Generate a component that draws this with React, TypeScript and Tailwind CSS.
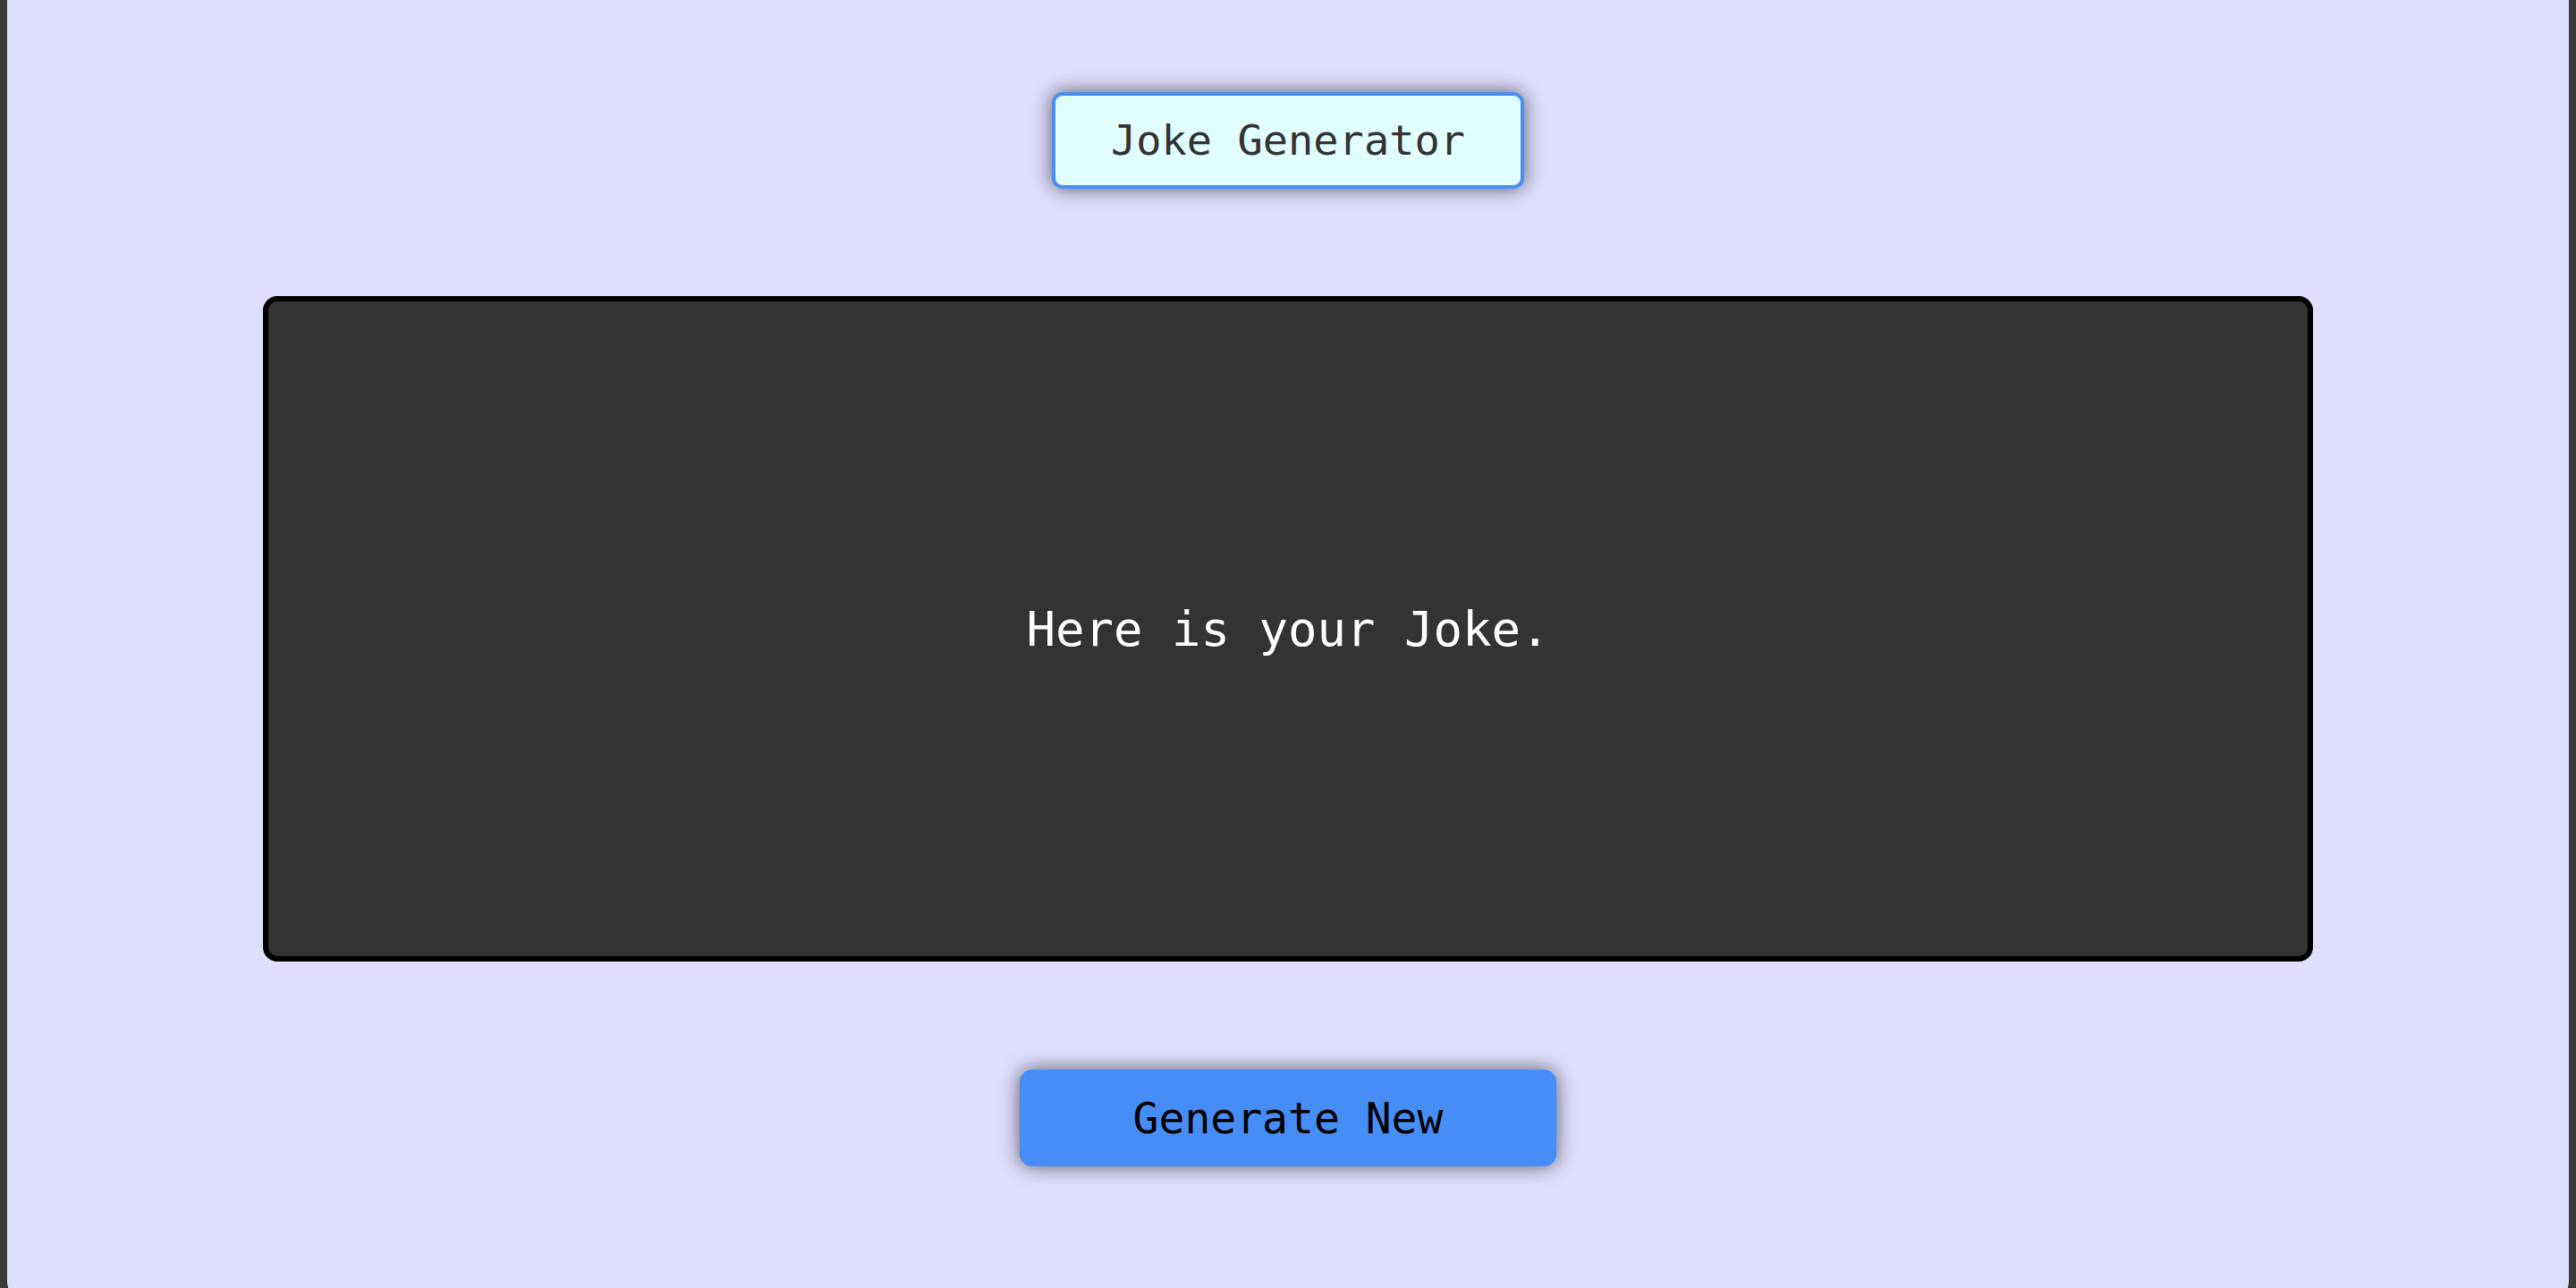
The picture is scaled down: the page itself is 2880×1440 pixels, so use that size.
import React, { useState } from 'react';

const JOKES = [
  'Here is your Joke.',
  'Why do programmers prefer dark mode? Because light attracts bugs.',
  'I told my computer a joke about UDP. It did not get it.',
];

const mono = { fontFamily: '"DejaVu Sans Mono", "Liberation Mono", monospace' };

export default function App() {
  const [idx, setIdx] = useState(0);

  return (
    <div className="h-[1440px] w-full overflow-hidden bg-[#3a3a3a]">
      <div
        className="mx-2 flex h-[1460px] flex-col items-center rounded-b-[28px] bg-[#dfdffd] pt-[103px]"
        style={mono}
      >
        {/* header pill */}
        <div className="flex h-[108px] w-[528px] items-center justify-center rounded-[12px] border-4 border-[#4a8ff5] bg-[#e2ffff] text-[47px] text-[#333333] shadow-[0_0_22px_rgba(0,0,0,0.6)]">
          Joke Generator
        </div>

        {/* joke panel */}
        <div className="mt-[120px] flex h-[744px] w-4/5 items-center justify-center rounded-[16px] border-[6px] border-black bg-[#333333] px-16 text-center text-[54px] text-white">
          {JOKES[idx]}
        </div>

        <button
          onClick={() => setIdx((idx + 1) % JOKES.length)}
          className="mt-[121px] flex h-[108px] w-[600px] items-center justify-center rounded-[14px] bg-[#468df6] text-[48px] text-black shadow-[0_0_22px_rgba(0,0,0,0.6)]"
          style={mono}
        >
          Generate New
        </button>
      </div>
    </div>
  );
}
